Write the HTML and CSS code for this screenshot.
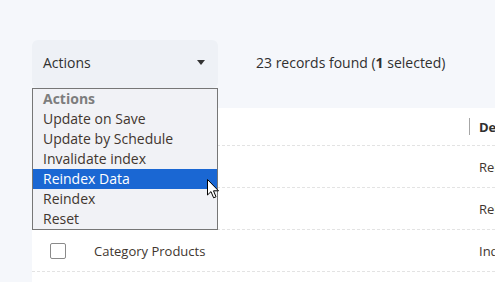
FILE: index.html
```html
<!DOCTYPE html>
<html>
<head>
  <meta charset="UTF-8">
  <title>Index Management</title>
  <link rel="stylesheet" href="styles.css">
</head>
<body>

  <div class="toolbar">
    <div class="akcje">
      <div class="akcje-pole">
        <span>Actions</span>
        <span class="strzalka"></span>
      </div>
      <ul class="lista">
        <li class="naglowek">Actions</li>
        <li>Update on Save</li>
        <li>Update by Schedule</li>
        <li>Invalidate index</li>
        <li class="aktywny">Reindex Data</li>
        <li>Reindex</li>
        <li>Reset</li>
      </ul>
      <svg class="kursor" width="13" height="20" viewBox="0 0 13 20">
        <path d="M0.5 0.5 L0.5 16 L4 12.6 L6.6 18.8 L9 17.8 L6.5 11.8 L11.5 11.8 Z" fill="#fff" stroke="#000" stroke-width="1" stroke-linejoin="round"/>
      </svg>
    </div>
    <div class="licznik">23 records found (<b>1</b> selected)</div>
  </div>

  <div class="tabela">
    <div class="wiersz glowa">
      <div class="kol-check"></div>
      <div class="kol-nazwa"></div>
      <div class="kol-opis"><span class="kreska"></span><b>Description</b></div>
    </div>
    <div class="wiersz">
      <div class="kol-check"><span class="box"></span></div>
      <div class="kol-nazwa">Design Config Grid</div>
      <div class="kol-opis">Rebuild design config grid index</div>
    </div>
    <div class="wiersz">
      <div class="kol-check"><span class="box"></span></div>
      <div class="kol-nazwa">Customer Grid</div>
      <div class="kol-opis">Rebuild Customer grid index</div>
    </div>
    <div class="wiersz">
      <div class="kol-check"><span class="box"></span></div>
      <div class="kol-nazwa">Category Products</div>
      <div class="kol-opis">Indexed category/products association</div>
    </div>
  </div>

</body>
</html>
```

FILE: styles.css
```css
body {
  background-color: #f5f7fb;
  font-family: 'Open Sans', sans-serif;
  font-size: 14px;
  color: #41362f;
  margin: 0;
  padding: 0;
  overflow: hidden;
}

.toolbar {
  display: flex;
  align-items: center;
  padding: 40px 0 0 32px;
  height: 48px;
  margin-bottom: 20px;
}

.akcje {
  position: relative;
  width: 186px;
}

.akcje-pole {
  height: 48px;
  background-color: #eef1f6;
  border-radius: 6px;
  display: flex;
  align-items: center;
  justify-content: space-between;
  padding: 0 13px 4px 11px;
  box-sizing: border-box;
  color: #303030;
}

.strzalka {
  width: 0;
  height: 0;
  border-left: 4px solid transparent;
  border-right: 4px solid transparent;
  border-top: 5px solid #333;
  margin-top: 0;
}

.lista {
  position: absolute;
  top: 48px;
  left: 0;
  width: 186px;
  box-sizing: border-box;
  margin: 0;
  padding: 0;
  list-style: none;
  background-color: #f1f2f6;
  border: 1px solid #767676;
  z-index: 10;
}

.lista li {
  height: 20px;
  line-height: 20px;
  padding-left: 10px;
}

.lista .naglowek {
  color: #7d7d7d;
  font-weight: bold;
}

.lista .aktywny {
  background-color: #1a67d3;
  color: white;
}

.kursor {
  position: absolute;
  left: 175px;
  top: 139px;
  z-index: 11;
}

.licznik {
  margin-left: 38px;
  margin-bottom: 4px;
  color: #303030;
}

.tabela {
  background-color: white;
  margin-left: 32px;
  height: 200px;
  font-size: 13px;
}

.wiersz {
  display: flex;
  align-items: center;
  height: 42px;
  border-bottom: 1px dashed #e3e3e3;
  box-sizing: border-box;
  white-space: nowrap;
}

.wiersz.glowa {
  height: 38px;
}

.kol-check {
  width: 62px;
  padding-left: 18px;
  box-sizing: border-box;
}

.kol-nazwa {
  width: 375px;
}

.kol-opis {
  display: flex;
  align-items: center;
  overflow: hidden;
  flex: 1;
  padding-left: 10px;
}

.glowa .kol-opis {
  padding-left: 0;
}

.kreska {
  flex-shrink: 0;
  width: 1px;
  height: 17px;
  background-color: #a6a6a6;
  margin-right: 9px;
}

.glowa b {
  color: #303030;
}

.box {
  display: block;
  width: 16px;
  height: 16px;
  border: 1px solid #8a8a8a;
  border-radius: 2px;
  box-sizing: border-box;
}
```
